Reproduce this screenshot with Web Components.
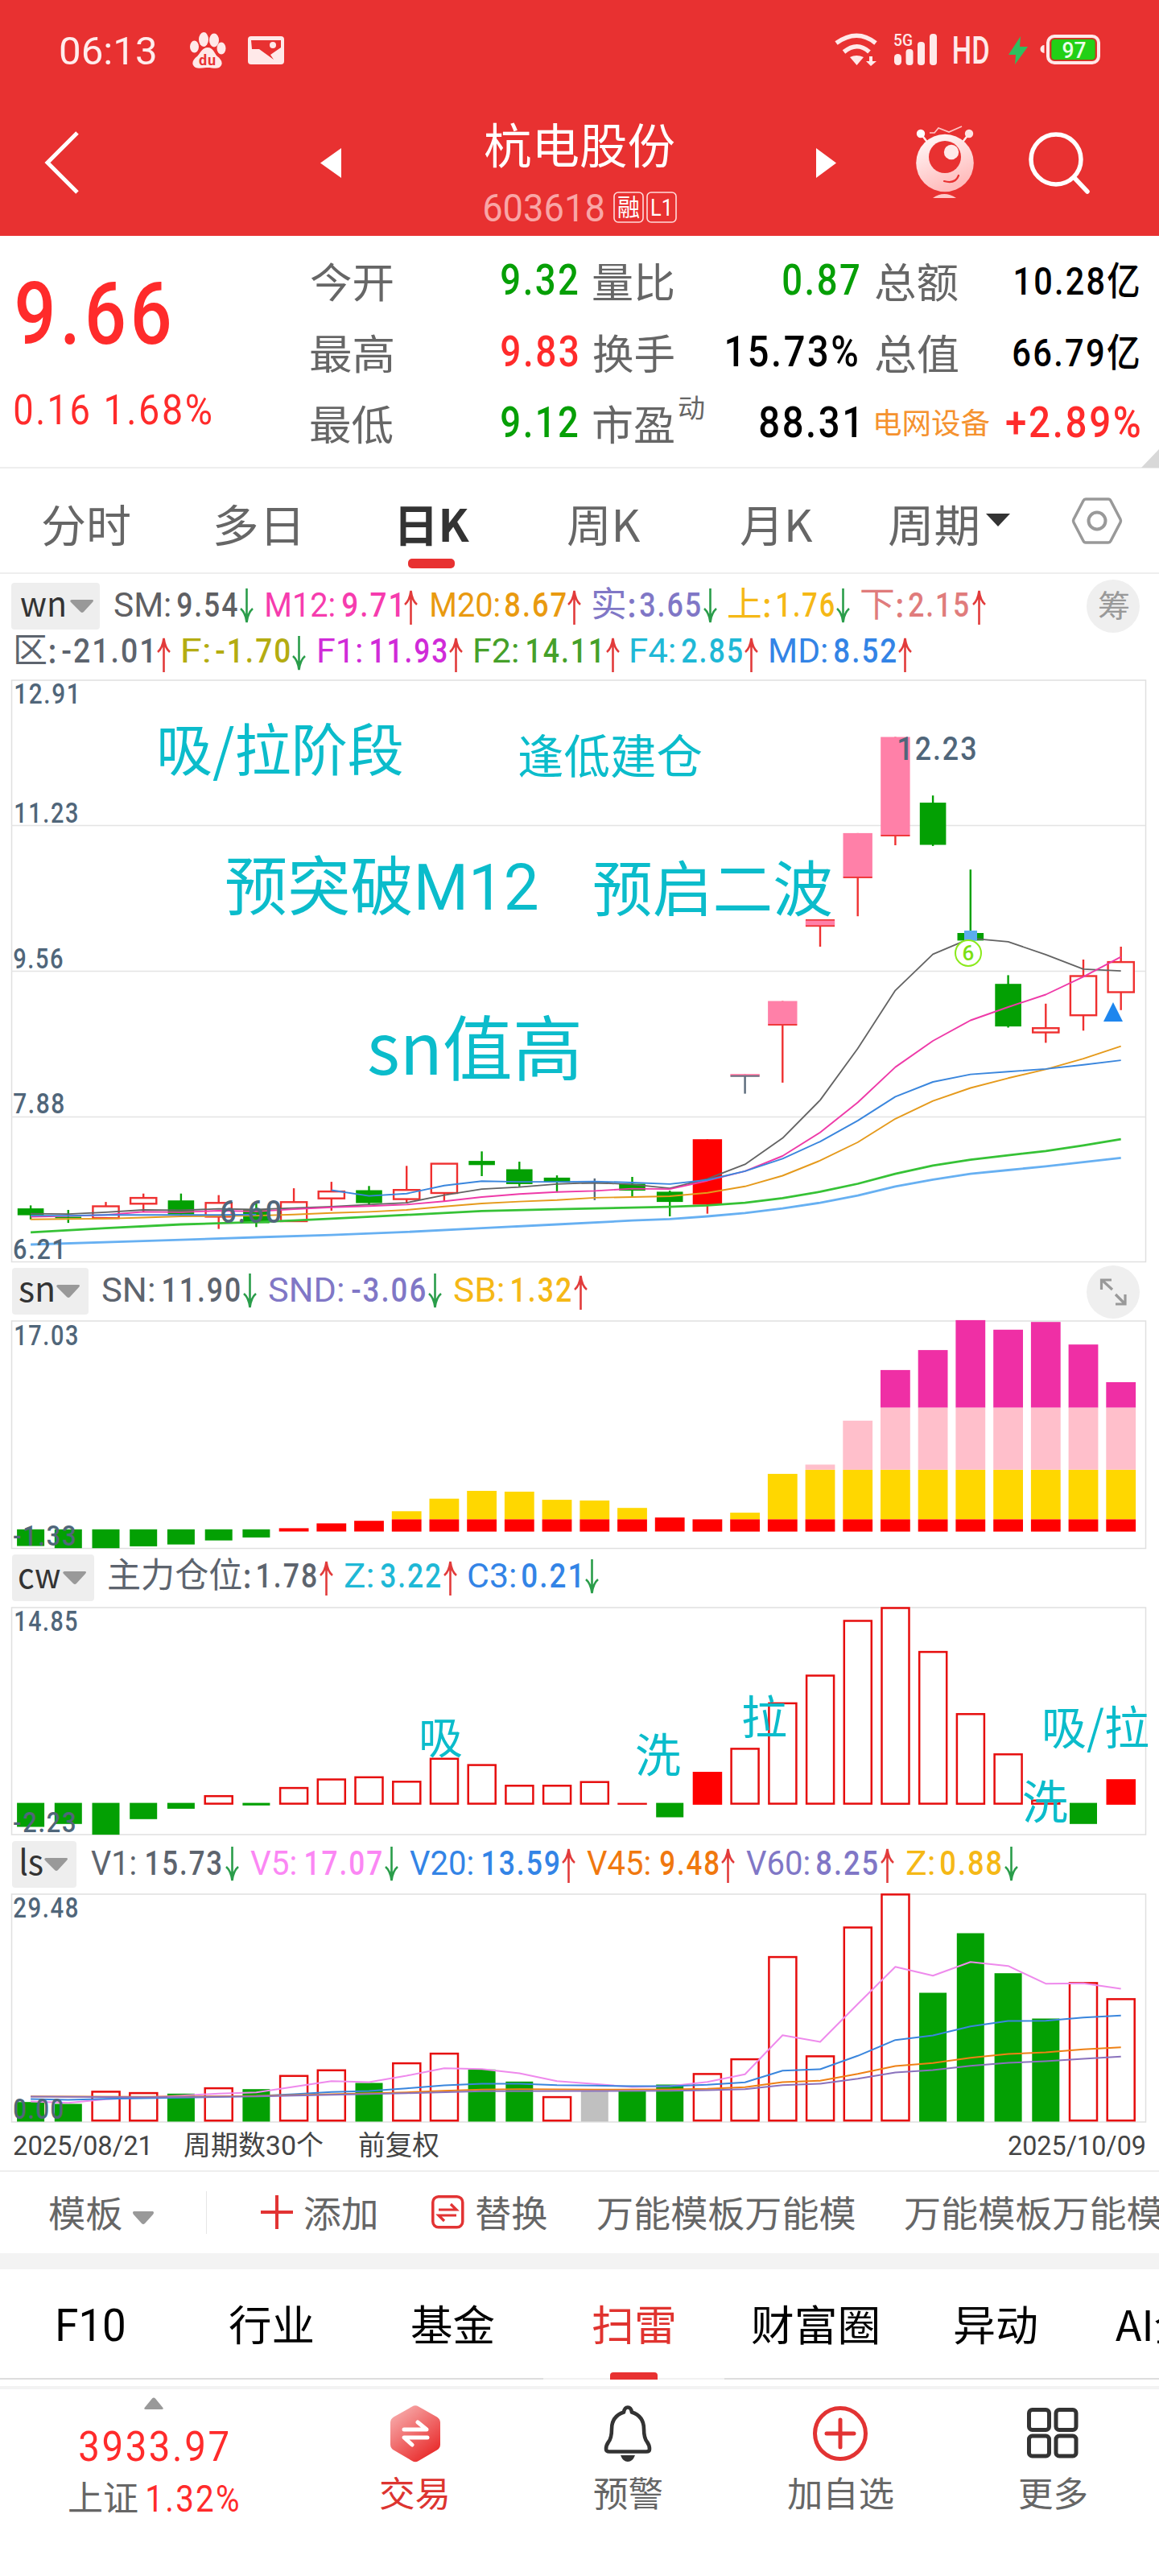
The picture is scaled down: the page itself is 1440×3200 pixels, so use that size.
<!DOCTYPE html>
<html lang="zh-CN">
<head>
<meta charset="utf-8">
<title>杭电股份 603618</title>
<style>
html,body{margin:0;padding:0;background:#fff}
body{width:1440px;height:3200px;overflow:hidden;font-family:Roboto,"Noto Sans CJK SC",sans-serif}
</style>
</head>
<body>
<stock-page></stock-page>
<script>
const LATIN = 'Roboto,"Noto Sans CJK SC",sans-serif';
const CJK = '"Noto Sans CJK SC",Roboto,sans-serif';
const ctx = document.createElement('canvas').getContext('2d');
// Figures are tracked out a little, so that the digits stay narrow and the point has air
const tracking = (text, size) => /^[-+\d.%亿]+$/.test(text) && text.includes('.') ? +(size * .055).toFixed(2) : 0;
// Ink extent of a string, used to fit condensed figures into their cell
function ink(text, size, weight, family) {
  ctx.font = `${weight} ${size}px ${family}`;
  const m = ctx.measureText(text);
  return { l: -m.actualBoundingBoxLeft, w: m.actualBoundingBoxLeft + m.actualBoundingBoxRight + tracking(text, size) * (text.length - 1) };
}

class FitText extends HTMLElement {
  connectedCallback() {
    const size = +this.getAttribute('size'), w = +this.getAttribute('w');
    const weight = this.getAttribute('weight') || 400;
    const family = this.hasAttribute('cjk') ? CJK : LATIN;
    const dy = this.getAttribute('dy') || 0;
    const m = ink(this.textContent, size, weight, family);
    this.attachShadow({ mode: 'open' }).innerHTML =
      `<style>:host{display:block;flex:none;width:${w}px;white-space:pre;line-height:1;font:${weight} ${size}px/1 ${family};letter-spacing:${tracking(this.textContent, size)}px}
      span{display:inline-block;transform-origin:0 0;transform:translateY(${dy}px) scaleX(${(w / m.w).toFixed(4)}) translateX(${(-m.l).toFixed(2)}px)}</style><span><slot></slot></span>`;
  }
}
customElements.define('fit-text', FitText);

class BaseRow extends HTMLElement {
  connectedCallback() {
    this.attachShadow({ mode: 'open' }).innerHTML =
      `<style>:host{display:flex;align-items:baseline;height:${this.getAttribute('h')}px;overflow:visible}
      :host::before{content:"";width:0;height:${this.getAttribute('base')}px;flex:none}</style><slot></slot>`;
  }
}
customElements.define('base-row', BaseRow);

const T = (a, b, text, size, color, weight = 400, opt = {}) => ({ a, b, html: ml =>
  `<fit-text style="margin-left:${ml}px;color:${color}" w="${b - a}" size="${size}" weight="${weight}" ${opt.cjk ? 'cjk' : ''} dy="${opt.dy || 0}">${text}</fit-text>` });
const G = (a, b, html, top) => ({ a, b, html: ml =>
  `<div style="flex:none;align-self:flex-start;width:${b - a}px;margin:${top}px 0 0 ${ml}px;line-height:0">${html}</div>` });
function row(h, base, items) {
  let x = 0;
  return `<base-row h="${h}" base="${base}">` + items.map(i => { const s = i.html((i.a - x).toFixed(1)); x = i.b; return s; }).join('') + '</base-row>';
}
const svg = (w, h, body, vb) => `<svg width="${w}" height="${h}" viewBox="${vb || `0 0 ${w} ${h}`}" fill="none" style="display:block;overflow:visible">${body}</svg>`;
const element = (name, css, html) => customElements.define(name, class extends HTMLElement {
  connectedCallback() {
    this.attachShadow({ mode: 'open' }).innerHTML = `<style>:host{display:block}${css}</style>${typeof html === 'function' ? html(this) : html}`;
  }
});

/* ---------- status bar ---------- */
const PAW = svg(46, 46, `<g fill="#ffe9e9"><ellipse cx="17" cy="9" rx="6" ry="9"/><ellipse cx="30" cy="10" rx="6" ry="8.5"/><ellipse cx="5.5" cy="18" rx="5.5" ry="7.5"/><ellipse cx="39" cy="20" rx="5.5" ry="7.5"/><path d="M22 19c7 0 8 7 12 11 4 3 7 7 5 11-3 6-10 3-17 3S7 47 4 41c-2-4 1-8 5-11 4-4 6-11 13-11z"/></g><text x="11" y="41" font-family="Roboto" font-weight="700" font-size="18" textLength="21" fill="#e83333">du</text>`);
const PIC = svg(45, 35, `<rect width="45" height="35" rx="4" fill="#ffe9e9"/><path d="M4 5h37v9l-13 9 4 6L14 16 5 16z" fill="#e83131"/><circle cx="31" cy="11" r="4" fill="#ffe9e9"/>`);
const WIFI = svg(53, 40, `<g stroke="#ffe9e9" stroke-width="5.5"><path d="M1 11.500Q27-7 50 11.500"/><path d="M10.500 22.500Q27 9 42 22.500"/></g><path d="M18 29q8-4 17 0l-8.500 10zM42 28h4v6h5l-7 6-6-6h4z" fill="#ffe9e9"/>`);
const SIGNAL = svg(53, 40, `<text x="-1" y="15" font-family="Roboto" font-weight="500" font-size="19.500" textLength="24" lengthAdjust="spacingAndGlyphs" fill="#ffe9e9">5G</text><g fill="#ffe9e9"><rect y="25" width="9" height="14" rx="4.500"/><rect x="14.500" y="19" width="9" height="20" rx="4"/><rect x="29" y="10" width="9" height="29" rx="4"/><rect x="44" width="9" height="39" rx="4"/></g>`);
const BOLT = svg(24, 35, `<path d="M15 0L0 23h9l-1 12 16-22h-10z" fill="#2fbf5f"/>`);
const BATTERY = svg(74, 37, `<path d="M3.500 13a5 5 0 0 0 0 10z" fill="#ffe9e9"/><rect x="8" y="2" width="63" height="33" rx="8" stroke="#ffe9e9" stroke-width="4"/><rect x="12" y="5.500" width="55" height="26" rx="4" fill="#22d016" stroke="#a54a1c"/><text x="25.500" y="28.500" font-family="Roboto" font-weight="500" font-size="27" textLength="30" lengthAdjust="spacingAndGlyphs" fill="#eaffe9">97</text>`);
element('status-bar', ':host{height:120px;background:#e83131}', () => row(120, 80, [
  T(75, 193, '06:13', 49, '#ffeded'), G(236, 281, PAW, 40), G(308, 353, PIC, 45),
  G(1038, 1090, WIFI, 42), G(1111, 1163, SIGNAL, 42), T(1185, 1228, 'HD', 48, '#ffe9e9', 500, { dy: -1 }),
  G(1253, 1277, BOLT, 45), G(1294, 1368, BATTERY, 43)]));

/* ---------- title bar ---------- */
const MASCOT = svg(72, 91, `<defs><linearGradient id="g" x1="0" y1="0" x2=".4" y2="1"><stop offset=".2" stop-color="#fff1f1"/><stop offset="1" stop-color="#ffbcbc"/></linearGradient></defs>
<path d="M6 10l10 13M66 10L56 23" stroke="#ffeded" stroke-width="2.500"/><circle cx="6" cy="10" r="5.200" fill="#fff"/><circle cx="66" cy="10" r="5.200" fill="#ffe3e3"/>
<path d="M17 9h6l5-6 13 5 16-7" stroke="#ffc7c7" stroke-width="1.700"/><circle cx="36" cy="46.500" r="35.800" fill="url(#g)"/><circle cx="36" cy="39" r="20" fill="#e83131"/><circle cx="44" cy="33" r="9.200" fill="#ffe9e9"/>
<path d="M35 69q14 4 18-7" stroke="#e83131" stroke-width="2.200" stroke-linecap="round"/><path d="M21 90q14-10 29 0z" fill="#ffc9c9"/>`);
const badge = t => svg(38, 39, `<rect x="1" y="1" width="36" height="37" rx="5" stroke="#ffdcdc" stroke-width="1.600"/><text x="19" y="30" text-anchor="middle" font-family='Roboto,"Noto Sans CJK SC"' font-size="30" fill="#fff" textLength="28" lengthAdjust="spacingAndGlyphs">${t}</text>`);
element('title-bar', ':host{height:173px;background:#e83131;display:flex}.side{flex:none;width:602px}.mid{flex:none;width:240px}', () => `
<div class="side">${row(173, 80, [G(56, 98, svg(42, 78, '<path d="M40 2L3 39l37 37" stroke="#fff" stroke-width="5"/>'), 43), G(398, 424, svg(26, 37, '<path d="M26 0v37L0 18.500z" fill="#fff"/>'), 64)])}</div>
<div class="mid">${row(95, 83, [T(0, 236, '杭电股份', 59, '#fff', 400, { cjk: 1 })])}${row(70, 60, [T(0, 148, '603618', 48, '#f9a6a6', 400), G(160, 198, badge('融'), 23), G(201, 239, badge('L1'), 23)])}</div>
<div class="side">${row(173, 80, [G(172, 197, svg(25, 37, '<path d="M0 0v37l25-18.500z" fill="#fff"/>'), 64), G(296, 368, MASCOT, 36), G(436, 512, svg(76, 76, '<circle cx="34" cy="34" r="31" stroke="#fff" stroke-width="5.500"/><path d="M57 57l16 17" stroke="#fff" stroke-width="5.500" stroke-linecap="round"/>'), 44)])}</div>`);

/* ---------- quote panel ---------- */
const GR = '#069f06', RD = '#ff2b2b', LB = '#666';
const lab = (a, b, t) => T(a, b, t, 51, LB, 400, { cjk: 1, dy: 4 });
const num = (a, b, t, c, s = 53) => T(a, b, t, s, c, 500);
element('quote-panel', ':host{height:287px;border-bottom:2px solid #eee;display:flex;background:#fff}.l{width:360px;flex:none}.r{flex:none;width:1080px}', () => `
<div class="l">${row(180, 134, [num(21, 210, '9.66', RD, 108)])}${row(100, 54, [T(18, 110, '0.16', 52, RD), T(132, 262, '1.68%', 52, RD)])}</div>
<div class="r">${row(88, 73, [lab(26, 128, '今开'), num(263, 358, '9.32', GR), lab(377, 477, '量比'), num(613, 707, '0.87', GR), lab(728, 830, '总额'), num(901, 1055, '10.28亿', '#000', 48)])}
${row(89, 74, [lab(26, 128, '最高'), num(263, 358, '9.83', RD), lab(377, 477, '换手'), num(543, 705, '15.73%', '#000'), lab(728, 830, '总值'), num(899, 1055, '66.79亿', '#000', 48)])}
${row(110, 73, [lab(26, 128, '最低'), num(263, 358, '9.12', GR), lab(377, 477, '市盈'), T(483, 515, '动', 33, LB, 400, { cjk: 1, dy: -24 }), num(584, 704, '88.31', '#000'), T(728, 870, '电网设备', 36, '#f5922f', 400, { cjk: 1, dy: -4 }), num(890, 1056, '+2.89%', RD), G(1058, 1080, svg(22, 23, '<path d="M22 0v23H0z" fill="#d8d8d8"/>'), 88)])}</div>`);

/* ---------- period tabs ---------- */
const pt = (a, b, t, c = '#666', w = 400) => T(a, b, t, 55, c, w, { cjk: 1, dy: 1 });
element('period-tabs', ':host{height:129px;border-bottom:2px solid #eee;background:#fff}.bar{width:58px;height:12px;margin-left:507px;border-radius:5px;background:#e83131}', () =>
  row(112, 90, [pt(53, 161, '分时'), pt(268, 370, '多日'), pt(497, 583, '日K', '#333', 700), pt(705, 796, '周K'), pt(920, 1010, '月K'), pt(1104, 1214, '周期'),
    G(1225, 1255, svg(30, 16, '<path d="M0 0h30L15 16z" fill="#333"/>'), 56),
    G(1332, 1394, svg(62, 58, '<path d="M17 2h28q2 0 3 2l12 23q1 2 0 4L48 54q-1 2-3 2H17q-2 0-3-2L2 31q-1-2 0-4L14 4q1-2 3-2z" stroke="#999" stroke-width="3.500"/><circle cx="31" cy="29" r="10.500" stroke="#999" stroke-width="4"/>'), 36)]) + '<div class="bar"></div>');

/* ---------- indicator headers ---------- */
const UP = svg(17, 43, '<path d="M8.500 1v42M1 18q6-5 7.500-17 1.500 12 7.500 17" stroke="#e23b3b" stroke-width="2.600"/>');
const DN = svg(17, 43, '<path d="M8.500 0v42M1 25q6 5 7.500 17 1.500-12 7.500-17" stroke="#2a9d4a" stroke-width="2.600"/>');
function fitSvg(a, b, y, t, size, fill, weight = 400, cjk = 0) {
  const fam = cjk ? CJK : LATIN, m = ink(t, size, weight, fam);
  return `<text transform="translate(${a} ${y}) scale(${((b - a) / m.w).toFixed(4)} 1)" x="${(-m.l).toFixed(2)}" letter-spacing="${tracking(t, size)}" font-size="${size}" font-weight="${weight}" font-family='${fam}' fill="${fill}">${t}</text>`;
}
const chip = (w, t, a, b, c) => svg(w, 58, `<rect width="${w}" height="58" rx="4" fill="#eee"/>${fitSvg(a, b, 41.5, t, 43, '#333', 400, 1)}<path d="M${c} 21h26q2 1 0 3L${c + 15} 36q-2 2-4 0L${c - 1} 24q-2-2 1-3z" fill="#999"/>`);
// each entry: label start/end, value start/end, arrow start, texts, colour, direction
const inds = (list, top) => list.flatMap(([a, b, c, d, e, l, v, col, up]) =>
  [T(a, b, l, 43, col, 400, { cjk: /[^\x00-\x7f]/.test(l) }), T(c, d, v, 43, col, 500), G(e, e + 17, up ? UP : DN, top + (up ? 2 : 0))]);
element('ind-head-wn', ':host{height:132px;background:#fff}', () =>
  row(68, 53, [G(14, 124, chip(110, 'wn', 12, 66, 75), 11), ...inds([
    [142, 211, 220, 295, 298, 'SM:', '9.54', '#5f6063', 0], [331, 415, 425, 497, 502, 'M12:', '9.71', '#f63cae', 1],
    [536, 620, 628, 703, 705, 'M20:', '8.67', '#e99a10', 1], [737, 788, 795, 870, 874, '实:', '3.65', '#8077c6', 0],
    [905, 956, 966, 1036, 1039, '上:', '1.76', '#f5b816', 0], [1070, 1121, 1129, 1203, 1208, '下:', '2.15', '#e07c7c', 1]], 18),
    G(1350, 1416, svg(66, 66, `<circle cx="33" cy="33" r="33" fill="#efefef"/>${fitSvg(15, 52, 46, '筹', 38, '#999', 400, 1)}`), 7)]) +
  row(64, 42, inds([[20, 68, 77, 188, 195, '区:', '-21.01', '#5d646e', 1], [227, 260, 268, 360, 363, 'F:', '-1.70', '#b4ac12', 0],
    [396, 449, 461, 555, 558, 'F1:', '11.93', '#d02bd8', 1], [590, 643, 655, 745, 753, 'F2:', '14.11', '#45a02a', 1],
    [784, 838, 847, 922, 925, 'F4:', '2.85', '#1fb8d6', 1], [957, 1027, 1037, 1113, 1116, 'MD:', '8.52', '#3384e6', 1]], 9)));
element('ind-head-sn', ':host{height:73px}', () => row(73, 49, [G(15, 110, chip(95, 'sn', 9, 51, 57), 7), ...inds([
  [127, 191, 203, 298, 302, 'SN:', '11.90', '#5d646e', 0], [334, 426, 437, 528, 532, 'SND:', '-3.06', '#8077c6', 0],
  [564, 625, 636, 709, 713, 'SB:', '1.32', '#f5b816', 1]], 14),
  G(1350, 1416, svg(66, 66, '<circle cx="33" cy="33" r="33" fill="#efefef"/><path d="M18.500 30V18H31M19 18l13 12M48 36v12H36M36 36l12 12" stroke="#999" stroke-width="3.200"/>'), 4)]));
element('ind-head-cw', ':host{height:73px}', () => row(73, 48, [G(15, 117, chip(102, 'cw', 9, 60, 65), 7), ...inds([
  [135, 310, 320, 393, 397, '主力仓位:', '1.78', '#5d646e', 1], [428, 463, 473, 547, 551, 'Z:', '3.22', '#1fb8d6', 1],
  [582, 640, 649, 720, 727, 'C3:', '0.21', '#3384e6', 0]], 13)]));
element('ind-head-ls', ':host{height:73px}', () => row(73, 49, [G(15, 95, chip(80, 'ls', 11, 38, 42), 7), ...inds([
  [113, 168, 182, 275, 280, 'V1:', '15.73', '#5d646e', 0], [311, 367, 380, 474, 478, 'V5:', '17.07', '#fb87f4', 0],
  [509, 587, 600, 694, 698, 'V20:', '13.59', '#3384e6', 1], [729, 807, 820, 893, 896, 'V45:', '9.48', '#f0780e', 1],
  [927, 1005, 1015, 1090, 1094, 'V60:', '8.25', '#8077c6', 1], [1126, 1160, 1169, 1244, 1248, 'Z:', '0.88', '#f5b816', 0]], 14)]));

/* ---------- charts ---------- */
const cx = i => 38.1 + i * 46.71;
const rect = (x, y, w, h, f) => `<rect x="${x.toFixed(1)}" y="${y.toFixed(1)}" width="${w}" height="${Math.max(h, 1.5).toFixed(1)}" fill="${f}"/>`;
const hollow = (x, y, w, h, s, sw) => `<rect x="${(x + sw / 2).toFixed(1)}" y="${(y + sw / 2).toFixed(1)}" width="${w - sw}" height="${Math.max(h - sw, .5).toFixed(1)}" fill="#fff" stroke="${s}" stroke-width="${sw}"/>`;
const stick = (x, a, b, c) => `<path d="M${x.toFixed(1)} ${a.toFixed(1)}V${b.toFixed(1)}" stroke="${c}" stroke-width="2.400"/>`;
const poly = (pts, f, c, w) => `<polyline points="${pts.map(([i, v]) => cx(i).toFixed(1) + ',' + f(v).toFixed(1)).join(' ')}" stroke="${c}" stroke-width="${w}" stroke-linejoin="round"/>`;
const seq = (a, s = 0) => a.map((v, i) => [i + s, v]);
const AX = '#50667a', NOTE = '#0bbccb';
const frame = (top, bot) => `<rect x="14.500" y="${top}" width="1409" height="${bot - top}" stroke="#e0e0e0" stroke-width="1.500"/>`;
const chart = (top, bot, body) => svg(1440, bot - top, frame(top, bot) + body, `0 ${top} 1440 ${bot - top}`);
const axis = (a, b, y, t) => fitSvg(a, b, y, t, 34.5, AX, 500);
const note = (a, b, y, t, s, cjk = 1) => fitSvg(a, b, y, t, s, NOTE, 400, cjk);

element('candle-chart', ':host{height:723px}', () => {
  const f = v => 840 + v * .4719, R = '#ef3030', g = '#03a003', P = '#ff80a8';
  const C = [['g',1393,1401,1419,1430],['g',1405,1423,1427,1439],['r',1384,1395,1427,1427],['r',1362,1373,1389,1410],['g',1362,1380,1417,1424],['r',1366,1386,1423,1455],['g',1385,1404,1440,1450],['r',1348,1384,1435,1435],['r',1331,1356,1375,1407],['g',1342,1353,1387,1392],['r',1289,1352,1377,1388],['r',1283,1283,1361,1382],['g',1251,1276,1287,1316],['g',1278,1298,1337,1343],['g',1314,1320,1333,1359],['k',1322,1333,1336,1379],['g',1318,1336,1354,1370],['g',1354,1357,1384,1422],['s',1219,1219,1389,1415],['q',1047,1047,1054,1099],['p',855,855,919,1070],['p',641,641,659,712],['p',413,413,531,632],['p',160,160,421,445],['g',314,333,444,447],['g',509,676,696,696],['g',787,810,922,925],['r',862,926,938,965],['r',746,789,893,933],['r',712,752,832,879]];
  let s = [1025.5, 1206.5, 1387.5].map(y => `<path d="M14 ${y}H1423" stroke="#e4e4e4" stroke-width="1.500"/>`).join('');
  C.forEach(([t, h, a, b, l], i) => {
    const x = cx(i), A = f(a), B = f(b), c = t === 'g' ? g : t === 'k' || t === 'q' ? '#5a6a7a' : R;
    s += stick(x, f(h), t === 'r' ? A : f(l), c);
    if (t === 'r') s += stick(x, B, f(l), c) + hollow(x - 17.3, A - 1, 34.6, B - A + 2, R, 2.4);
    else if (t === 'g') s += rect(x - 16.3, A, 32.6, B - A, g);
    else if (t === 'k') s += rect(x - 16.3, A, 32.6, 1.6, c);
    else if (t === 's') s += rect(x - 18.2, A, 36.4, B - A + 1, '#f00');
    else s += rect(x - 18.2, A, 36.4, B - A, P) + rect(x - 18, B - 1.6, 36, 1.8, c) + (i === 21 ? rect(x - 18, A - .5, 36, 1.6, R) : '');
  });
  s += poly(seq([1415,1416,1411,1405,1406,1402,1404,1400,1396,1391,1386,1366,1350,1345,1337,1333,1338,1348,1323,1285,1216,1116,980,827,732,690,699,733,771,776]), f, '#636363', 1.8);
  s += poly(seq([1423,1421,1418,1410,1411,1407,1409,1403,1398,1395,1391,1382,1371,1363,1358,1355,1349,1350,1328,1303,1263,1201,1122,1029,960,906,871,838,791,739]), f, '#ee3aa8', 1.9);
  s += poly(seq([1430,1429,1428,1425,1422,1421,1420,1417,1413,1410,1405,1396,1388,1383,1379,1373,1371,1369,1360,1343,1315,1275,1227,1165,1118,1084,1058,1035,1007,974]), f, '#e59a1c', 1.9);
  s += poly(seq([1420,1420,1418,1418,1418,1418,1417]), f, '#3d85dc', 1.9) + poly(seq([1353,1368,1362,1341,1329,1331,1331,1330,1333,1337,1326,1303,1270,1225,1170,1107,1068,1048,1041,1034,1023,1011], 8), f, '#3a86dd', 1.9);
  s += poly([[0,1464],[2,1453],[4,1443],[6,1437],[7,1433],[8,1428],[10,1418],[12,1408],[14,1403],[16,1399],[17,1397],[18,1393],[19,1386],[20,1374],[21,1357],[22,1336],[23,1310],[24,1288],[25,1273],[26,1261],[27,1250],[28,1235],[29,1219]], f, '#36c236', 2.8);
  s += poly([[0,1496],[3,1487],[6,1477],[8,1471],[10,1463],[12,1453],[14,1443],[16,1433],[17,1429],[18,1422],[19,1413],[20,1401],[21,1386],[22,1367],[23,1343],[24,1325],[25,1310],[26,1300],[27,1290],[28,1279],[29,1268]], f, '#67b0f2', 2.8);
  s += '<rect x="1198" y="1156" width="16" height="12.500" fill="#5cacee"/><circle cx="1203" cy="1184" r="16" fill="#fff" stroke="#8bea1c" stroke-width="2"/>' + fitSvg(1196.5, 1210, 1193, '6', 25, '#7be012', 500) + '<path d="M1371 1269l12-24 12 24z" fill="#1e86ee"/>';
  s += axis(19, 94, 874, '12.91') + axis(19, 96, 1022, '11.23') + axis(17, 78, 1202.5, '9.56') + axis(17, 79, 1383, '7.88') + axis(17, 76, 1563.5, '6.21');
  s += fitSvg(275, 349, 1518.5, '6.60', 39, AX, 500) + fitSvg(1117, 1212, 943.5, '12.23', 40, AX, 500);
  s += note(199, 500, 958, '吸/拉阶段', 70) + note(645, 872, 961, '逢低建仓', 58) + note(282, 667, 1130, '预突破M12', 80, 0) + note(738, 1033, 1132, '预启二波', 75) + note(458, 719, 1334.5, 'sn值高', 88);
  return chart(845, 1567.5, s);
});

const y6 = v => 1560 + v / 2.1778;
element('sn-chart', ':host{height:283px}', () => {
  const tops = [785,791,791,786,781,770,762,737,724,717,691,657,636,638,660,662,682,708,713,695,590,565,446,309,255,174,200,179,240,342];
  let s = '';
  tops.forEach((t, i) => {
    const x = cx(i), bar = (a, b, c) => rect(x - 18.4, y6(a), 36.8, (b - a) / 2.1778, c);
    if (i < 7) { s += rect(x - 17, y6(740), 34, (t - 740) / 2.1778, '#03a003'); return; }
    if (t < 410) s += bar(t, 411, '#ef2fa5');
    if (t < 578) s += bar(Math.max(t, 411), 579, '#ffbfcb');
    if (t < 700) s += bar(Math.max(t, 579), 713, '#ffd700');
    s += bar(t < 700 ? 713 : t, 746, '#f00');
  });
  return chart(1641, 1923.5, s + axis(19, 96, 1671, '17.03') + axis(17, 93, 1919.5, '-1.33'));
});
element('cw-chart', ':host{height:283px}', () => {
  const d = [['g',1545],['g',1537],['g',1566],['g',1524],['g',1496],['r',1459],['g',1487],['r',1437],['r',1414],['r',1408],['r',1420],['r',1358],['r',1375],['r',1431],['r',1431],['r',1421],['r',1480],['g',1519],['s',1396],['r',1331],['r',1208],['r',1133],['r',985],['r',950],['r',1069],['r',1237],['r',1346],['r',1471],['g',1537],['s',1416]];
  let s = '';
  d.forEach(([k, t], i) => {
    const x = cx(i);
    if (k === 'g') s += rect(x - 17, y6(1480), 34, (t - 1480) / 2.1778, '#03a003');
    else if (k === 's') s += rect(x - 18.2, y6(t), 36.5, (1485 - t) / 2.1778, '#f00');
    else s += hollow(x - 18.2, y6(t), 36.5, (1485 - t) / 2.1778, '#e60d0d', i === 16 ? 1.8 : 2.5);
  });
  return chart(1997, 2279, s + axis(19, 96, 2025.5, '14.85') + axis(17, 93, 2275.5, '-2.23') +
    note(524, 574, 2179, '吸', 54) + note(791, 845, 2201, '洗', 57) + note(923, 977, 2154, '拉', 57) + note(1298, 1427, 2167, '吸/拉', 57) + note(1272, 1326, 2259, '洗', 57));
});
element('volume-chart', ':host{height:283px}', () => {
  const f = v => 2270 + v / 3;
  const d = 'g1022 g1029 r980 r985 g991 r967 g974 r921 r900 g951 r874 r838 g901 g946 r1000 k980 g980 g957 r914 r859 r478 r848 r368 r245 g615 g393 g542 g711 r575 r635'.split(' ');
  let s = '';
  d.forEach((e, i) => {
    const x = cx(i), t = +e.slice(1), h = (1095 - t) / 3;
    s += e[0] === 'r' ? hollow(x - 18.2, f(t), 36.5, h, '#e60d0d', 2.5) : rect(x - 17, f(t), 34, h, e[0] === 'g' ? '#03a003' : '#c0c0c0');
  });
  s += poly(seq([1020,1025,1012,1005,998,991,986,965,944,948,924,896,899,915,944,955,966,963,947,919,773,798,657,518,551,500,515,581,580,600]), f, '#ee8aec', 2);
  s += poly([[0,1011],[1,1014],[2,1010],[4,1006],[6,1000],[7,993],[8,985],[9,981],[10,971],[11,960],[12,954],[13,954],[14,959],[15,961],[16,963],[17,963],[18,958],[19,949],[20,905],[21,900],[22,850],[23,791],[24,774],[25,740],[26,720],[27,719],[28,707],[29,700]], f, '#3a86dd', 2);
  s += poly([[0,1001],[3,1003],[6,1000],[8,993],[10,986],[11,980],[12,976],[13,974],[15,976],[17,975],[18,973],[19,967],[20,948],[21,943],[22,917],[23,888],[24,877],[25,857],[26,843],[27,837],[28,826],[29,818]], f, '#ee8116', 2);
  s += poly([[0,1002],[3,1004],[6,1001],[8,995],[10,989],[12,982],[15,981],[17,980],[18,978],[19,974],[20,959],[21,954],[22,935],[23,912],[24,903],[25,887],[26,876],[27,870],[28,861],[29,853]], f, '#8a72bd', 2);
  return chart(2352.5, 2635.5, s + axis(17, 96, 2381.5, '29.48') + axis(17, 78, 2631, '0.00'));
});
element('date-row', ':host{height:60px;border-bottom:2px solid #eee}', () => row(60, 41, [
  T(17, 184, '2025/08/21', 34, '#444'), T(229, 401, '周期数30个', 34, '#444'), T(446, 545, '前复权', 34, '#444', 400, { cjk: 1 }), T(1253, 1422, '2025/10/09', 34, '#444')]));

/* ---------- template bar ---------- */
element('template-bar', ':host{height:101px;border-bottom:20px solid #f3f3f3;overflow:hidden}', () => {
  const t = (a, b, s) => T(a, b, s, 45.5, '#666', 400, { cjk: 1 });
  return row(101, 69, [t(61, 151, '模板'), G(165, 191, svg(26, 17, '<path d="M1 0h24q2 1 0 4L15 15q-2 2-4 0L1 4Q-1 1 1 0z" fill="#999"/>'), 49), G(256, 257, svg(1, 53, '<path d="M.5 0v53" stroke="#e6e6e6"/>'), 24),
    G(324, 364, svg(40, 42, '<path d="M20 0v42M0 21h40" stroke="#e23333" stroke-width="4"/>'), 29), t(378, 467, '添加'),
    G(536, 577, svg(41, 42, `<rect x="1.800" y="1.800" width="37" height="38" rx="7" stroke="#e23333" stroke-width="3.500"/><path d="M9 18h22l-7-7M31 25H9l7 7" stroke="#e23333" stroke-width="3.200"/>`), 29), t(591, 680, '替换'),
    t(742, 1062, '万能模板万能模'), t(1124, 1444, '万能模板万能模')]);
});

/* ---------- info tabs ---------- */
element('info-tabs', ':host{height:137px;overflow:hidden;background:linear-gradient(#ddd,#ddd) 0 100%/675px 2px no-repeat,linear-gradient(#ddd,#ddd) 900px 100%/540px 2px no-repeat,linear-gradient(#f2f2f2,#f2f2f2) 675px 100%/225px 2px no-repeat,#fff}.bar{width:59px;height:9px;margin-left:758px;border-radius:4px 4px 0 0;background:#e83131}', () => {
  const t = (a, b, s, c = '#000') => T(a, b, s, 52, c, 400, { cjk: 1 });
  return row(128, 89, [T(72, 154, 'F10', 55, '#000'), t(285, 389, '行业'), t(511, 614, '基金'), t(736, 838, '扫雷', '#e0332f'), t(934, 1090, '财富圈'), t(1186, 1288, '异动'), t(1386, 1486, 'AI全')]) + '<div class="bar"></div>';
});

/* ---------- bottom nav ---------- */
const HEX = svg(62, 70, '<defs><linearGradient id="h" x1=".1" y1="0" x2=".8" y2="1"><stop stop-color="#f8b3b3"/><stop offset="1" stop-color="#e82525"/></linearGradient></defs><path d="M27 1.500q4-2.500 8 0l23 13q4 2.500 4 7v27q0 4.500-4 7L35 69q-4 2.500-8 0L4 55.500q-4-2.500-4-7v-27q0-4.500 4-7z" fill="url(#h)"/><path d="M17 30h28L34 21M46 40H17l10 9" stroke="#fff" stroke-width="5" stroke-linejoin="round" stroke-linecap="round"/>');
const BELL = svg(58, 70, '<path d="M29 2.500q4 0 5 6 15 5 15 21 0 11 4 16 3 4 3 9 0 3-4 3H6q-4 0-4-3 0-5 3-9 4-5 4-16 0-16 15-21 1-6 5-6z" stroke="#333" stroke-width="4.600" stroke-linejoin="round"/><path d="M20 62h18q-3 8-9 8t-9-8z" fill="#333"/>');
const ADD = svg(68, 68, '<circle cx="34" cy="34" r="31.500" stroke="#e23333" stroke-width="5"/><path d="M34 17v34M17 34h34" stroke="#e23333" stroke-width="5" stroke-linecap="round"/>');
const GRID = svg(64, 62, '<g stroke="#333" stroke-width="5"><rect x="2.500" y="2.500" width="25" height="25" rx="4"/><rect x="36" y="2.500" width="25" height="25" rx="4"/><rect x="2.500" y="35" width="25" height="25" rx="4"/><rect x="36" y="35" width="25" height="25" rx="4"/></g>');
element('bottom-nav', ':host{margin-top:8px;border-top:4px solid #f3f3f3;height:232px;background:#fff;display:flex}.i{flex:none;width:380px}.m{flex:none;width:1060px}', () => `
<div class="i">${row(26, 25, [G(179, 203, svg(24, 15, '<path d="M10 1.500q2-2 4 0l9 11q2 2-1 2.500H2q-3-.500-1-2.500z" fill="#999"/>'), 10)])}${row(70, 63, [T(99, 283, '3933.97', 52, '#ff2b2b')])}${row(60, 56, [T(86, 171, '上证', 43, '#666', 400, { cjk: 1, dy: -1 }), T(183, 296, '1.32%', 46, '#ff2b2b')])}</div>
<div class="m">${row(96, 90, [G(105, 167, HEX, 20), G(371, 429, BELL, 20), G(630, 698, ADD, 21), G(896, 960, GRID, 23)])}
${row(60, 50, [T(93, 176, '交易', 43, '#dd3430', 400, { cjk: 1 }), T(358, 443, '预警', 43, '#666', 400, { cjk: 1 }), T(599, 730, '加自选', 43, '#666', 400, { cjk: 1 }), T(887, 970, '更多', 43, '#666', 400, { cjk: 1 })])}</div>`);

element('stock-page', ':host{display:flex;flex-direction:column;width:1440px;height:3200px;background:#fff}:host>*{flex:none}',
  ['status-bar', 'title-bar', 'quote-panel', 'period-tabs', 'ind-head-wn', 'candle-chart', 'ind-head-sn', 'sn-chart', 'ind-head-cw', 'cw-chart', 'ind-head-ls', 'volume-chart', 'date-row', 'template-bar', 'info-tabs', 'bottom-nav'].map(n => `<${n}></${n}>`).join(''));
</script>
</body>
</html>
